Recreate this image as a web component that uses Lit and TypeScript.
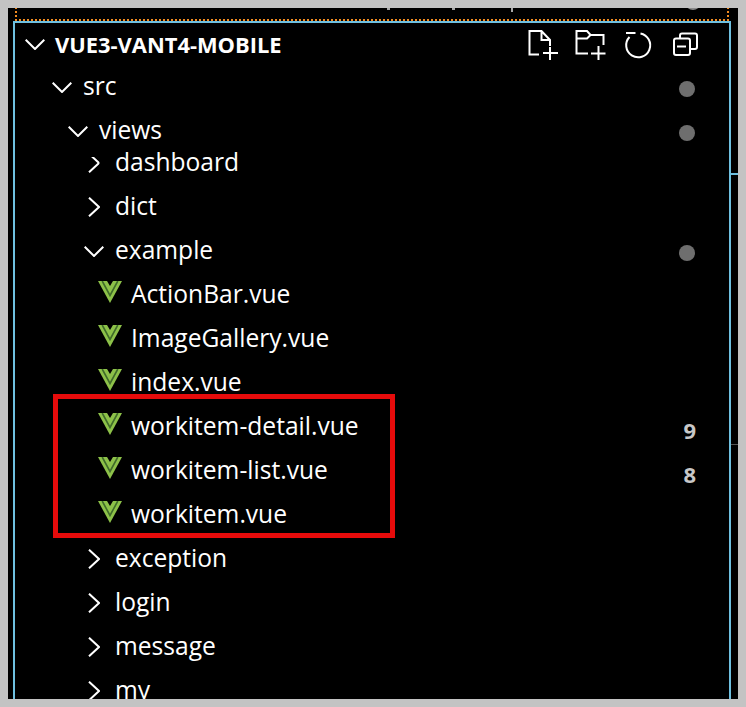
import { LitElement, html, css, svg } from "lit";
import { customElement } from "lit/decorators.js";

type Row = {
  label: string;
  depth: number;
  kind: "open" | "closed" | "vue";
  dot?: boolean;
  badge?: string;
  overlap?: boolean;
};

const ROWS: Row[] = [
  { label: "src", depth: 0, kind: "open", dot: true },
  { label: "views", depth: 1, kind: "open", dot: true },
  { label: "dashboard", depth: 2, kind: "closed", overlap: true },
  { label: "dict", depth: 2, kind: "closed" },
  { label: "example", depth: 2, kind: "open", dot: true },
  { label: "ActionBar.vue", depth: 3, kind: "vue" },
  { label: "ImageGallery.vue", depth: 3, kind: "vue" },
  { label: "index.vue", depth: 3, kind: "vue" },
  { label: "workitem-detail.vue", depth: 3, kind: "vue", badge: "9" },
  { label: "workitem-list.vue", depth: 3, kind: "vue", badge: "8" },
  { label: "workitem.vue", depth: 3, kind: "vue" },
  { label: "exception", depth: 2, kind: "closed" },
  { label: "login", depth: 2, kind: "closed" },
  { label: "message", depth: 2, kind: "closed" },
  { label: "my", depth: 2, kind: "closed" },
];

const chevronDown = svg`<path d="M0.7 0.7 L10 10 L19.3 0.7" fill="none" stroke="#fff" stroke-width="2"/>`;
const chevronRight = svg`<path d="M1 0.7 L11 10 L1 19.3" fill="none" stroke="#fff" stroke-width="2"/>`;

@customElement("app-root")
export class AppRoot extends LitElement {
  static styles = css`
    :host {
      display: block;
      width: 746px;
      height: 707px;
      overflow: hidden;
      background: #c3c3c3;
      font-family: "Open Sans", "Noto Sans", sans-serif;
      color: #fff;
    }
    .frame {
      position: relative;
      box-sizing: border-box;
      width: 746px;
      height: 707px;
      padding: 8px;
    }
    .panel {
      position: relative;
      height: 691px;
      background: #000;
      overflow: hidden;
    }
    .top {
      height: 13px;
      margin-left: 7px;
      margin-right: 9px;
      background:
        repeating-linear-gradient(90deg, #f38b1f 0 2px, transparent 2px 4px) left bottom / 100% 2px no-repeat,
        repeating-linear-gradient(0deg, #f38b1f 0 2px, transparent 2px 4px) left top / 2px 100% no-repeat,
        repeating-linear-gradient(0deg, #f38b1f 0 2px, transparent 2px 4px) right top / 2px 100% no-repeat;
    }
    .rule {
      height: 2px;
      margin-left: 5px;
      margin-right: 7px;
      background: #6fc0e0;
    }
    .tree {
      box-sizing: border-box;
      height: 676px;
      margin-left: 5px;
      margin-right: 7px;
      border-left: 2px solid #6fc0e0;
      border-right: 2px solid #6fc0e0;
    }
    .head {
      box-sizing: border-box;
      display: flex;
      align-items: center;
      height: 42px;
      padding: 1px 30px 0 10px;
      font-weight: 700;
      font-size: 21.9px;
    }
    .head .chev {
      flex: none;
      width: 20px;
      height: 11px;
      margin-right: 10px;
    }
    .head .title {
      flex: 1;
    }
    .tools {
      display: flex;
      gap: 17px;
      align-items: center;
      margin-top: 1px;
    }
    .tools svg {
      width: 31px;
      height: 30px;
      margin-right: -1px;
      display: block;
      overflow: visible;
    }
    .row {
      position: relative;
      display: flex;
      align-items: center;
      height: 44px;
      font-size: 24.6px;
      line-height: 44px;
      white-space: nowrap;
    }
    .row.overlap {
      margin-top: -12px;
    }
    .row.overlap .ico svg {
      clip-path: inset(4px 0 0 0);
    }
    .ico {
      flex: none;
      display: flex;
      align-items: center;
      justify-content: center;
      width: 32px;
      height: 32px;
      margin-right: 5.5px;
    }
    .label {
      margin-top: -2px;
    }
    .vue {
      margin-bottom: 6px;
    }
    .end {
      position: absolute;
      right: 34px;
      top: 0;
      bottom: 0;
      display: flex;
      align-items: center;
    }
    .dot {
      width: 16px;
      height: 16px;
      margin-top: 4px;
      border-radius: 50%;
      background: #6e6e6e;
    }
    .badge {
      font-size: 22px;
      font-weight: 700;
      color: #c8c8c8;
      margin-top: 6px;
      margin-right: -1px;
    }
    .box {
      position: absolute;
      left: 53px;
      top: 394px;
      width: 342px;
      height: 144px;
      box-sizing: border-box;
      border: 5px solid #e60b0b;
    }
    .tick {
      position: absolute;
      right: 0;
      width: 7px;
    }
    .tick.blue {
      top: 165px;
      height: 2px;
      background: #6fc0e0;
    }
    .tick.grey {
      top: 436px;
      height: 1px;
      background: #555;
    }
    .frag {
      position: absolute;
      top: 0;
      background: #a8a8a8;
    }
    .frag.a {
      left: 379px;
      width: 3px;
      height: 2px;
    }
    .frag.b {
      left: 444px;
      width: 3px;
      height: 2px;
    }
    .frag.c {
      left: 503px;
      width: 2px;
      height: 4px;
    }
    .frag.d {
      left: 677px;
      top: -14px;
      width: 16px;
      height: 16px;
      border-radius: 50%;
      background: #8a8a8a;
    }
  `;

  private icon(kind: Row["kind"]) {
    if (kind === "open") {
      return html`<svg width="20" height="11" viewBox="0 0 20 11">${chevronDown}</svg>`;
    }
    if (kind === "closed") {
      return html`<svg width="12" height="20" viewBox="0 0 12 20">${chevronRight}</svg>`;
    }
    return html`<svg class="vue" width="24" height="22" viewBox="0 0 24 22">
      <path d="M0 0 H24 L12 22 Z" fill="#8dc149"/>
      <path d="M4.2 0 L12 14.5 L19.8 0" fill="none" stroke="#3f6b2a" stroke-width="1.6"/>
      <path d="M9 0 H15 L12 5 Z" fill="#000"/>
    </svg>`;
  }

  render() {
    return html`
      <div class="frame">
        <div class="panel">
          <div class="top"></div>
          <div class="rule"></div>
          <div class="tree">
            <div class="head">
              <svg class="chev" viewBox="0 0 20 11">${chevronDown}</svg>
              <span class="title">VUE3-VANT4-MOBILE</span>
              <div class="tools">
                <svg viewBox="0 0 31 30" fill="none" stroke="#fff" stroke-width="2">
                  <path d="M11 24.5 H1.5 V1 H13.5 L22 10 V16 M13.5 1 V10 H22 M15 23 H30 M22 17 V30"/>
                </svg>
                <svg viewBox="0 0 31 30" fill="none" stroke="#fff" stroke-width="2">
                  <path d="M13 23.5 H1.5 V1 H12 L15.5 5 H28.5 V15 M1.5 8.5 H12 L15.5 5 M16 23.5 H30.5 M23.5 16 V30"/>
                </svg>
                <svg viewBox="0 0 31 30" fill="none" stroke="#fff" stroke-width="2">
                  <path d="M4 3 H13.5 M18.5 3.5 A12 12 0 1 1 7.5 7"/>
                </svg>
                <svg viewBox="0 0 31 30" fill="none" stroke="#fff" stroke-width="2">
                  <path d="M11 8 V5.5 Q11 3.5 13 3.5 H26 Q28 3.5 28 5.5 V17 Q28 19 26 19 H22"/>
                  <rect x="5" y="8.5" width="16" height="16.5" rx="2"/>
                  <path d="M8 16.5 H17"/>
                </svg>
              </div>
            </div>
            ${ROWS.map(
              (r) => html`
                <div
                  class="row ${r.overlap ? "overlap" : ""}"
                  style="padding-left:${30.5 + r.depth * 16}px"
                >
                  <span class="ico">${this.icon(r.kind)}</span>
                  <span class="label">${r.label}</span>
                  ${r.dot
                    ? html`<span class="end"><span class="dot"></span></span>`
                    : r.badge
                      ? html`<span class="end"><span class="badge">${r.badge}</span></span>`
                      : ""}
                </div>
              `
            )}
          </div>
          <div class="tick blue"></div>
          <div class="tick grey"></div>
          <div class="frag a"></div>
          <div class="frag b"></div>
          <div class="frag c"></div>
          <div class="frag d"></div>
        </div>
        <div class="box"></div>
      </div>
    `;
  }
}
